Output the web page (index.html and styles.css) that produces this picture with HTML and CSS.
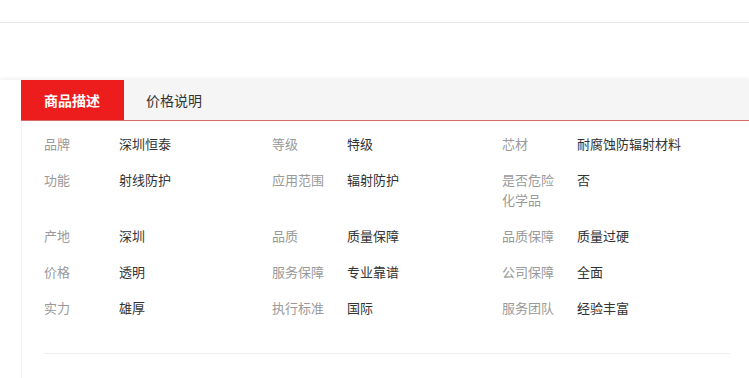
FILE: index.html
```html
<!DOCTYPE html>
<html lang="zh-CN">
<head>
<meta charset="utf-8">
<title>商品描述</title>
<link rel="stylesheet" href="styles.css">
</head>
<body>
  <header class="topbar"></header>
  <section class="detail">
    <div class="detail-body">
      <nav class="tabs">
        <span class="tab active">商品描述</span>
        <span class="tab">价格说明</span>
      </nav>
      <div class="props">
        <dl class="prop"><dt>品牌</dt><dd>深圳恒泰</dd></dl>
        <dl class="prop"><dt>等级</dt><dd>特级</dd></dl>
        <dl class="prop"><dt>芯材</dt><dd>耐腐蚀防辐射材料</dd></dl>
        <dl class="prop"><dt>功能</dt><dd>射线防护</dd></dl>
        <dl class="prop"><dt>应用范围</dt><dd>辐射防护</dd></dl>
        <dl class="prop"><dt>是否危险化学品</dt><dd>否</dd></dl>
        <dl class="prop"><dt>产地</dt><dd>深圳</dd></dl>
        <dl class="prop"><dt>品质</dt><dd>质量保障</dd></dl>
        <dl class="prop"><dt>品质保障</dt><dd>质量过硬</dd></dl>
        <dl class="prop"><dt>价格</dt><dd>透明</dd></dl>
        <dl class="prop"><dt>服务保障</dt><dd>专业靠谱</dd></dl>
        <dl class="prop"><dt>公司保障</dt><dd>全面</dd></dl>
        <dl class="prop"><dt>实力</dt><dd>雄厚</dd></dl>
        <dl class="prop"><dt>执行标准</dt><dd>国际</dd></dl>
        <dl class="prop"><dt>服务团队</dt><dd>经验丰富</dd></dl>
      </div>
      <div class="divider"></div>
    </div>
  </section>
</body>
</html>
```
FILE: styles.css
```css
html, body {
  margin: 0;
  padding: 0;
  background: #fff;
}

body {
  font-family: "Noto Sans CJK SC", "Microsoft YaHei", sans-serif;
  color: #333;
  overflow: hidden;
  height: 378px;
}

.topbar {
  height: 22px;
  border-bottom: 1px solid #e8e8e8;
}

.detail {
  margin-top: 57px;
  box-shadow: 0 -2px 3px rgba(0, 0, 0, 0.05);
}

.detail-body {
  margin-left: 21px;
}

.tabs {
  display: flex;
  height: 40px;
  background: #f5f5f5;
  border-bottom: 1px solid #d46a6a;
}

.tab {
  padding: 0 22px;
  line-height: 40px;
  font-size: 14px;
  color: #333;
}

.tab.active {
  padding: 0 24px 0 23px;
  background: #ee1d1d;
  color: #fff;
  font-weight: bold;
}

.props {
  display: grid;
  grid-template-columns: 228px 230px 1fr;
  padding: 5px 19px 0 22px;
  border-left: 1px solid #f0f0f0;
}

.prop {
  display: flex;
  margin: 0;
  padding: 8px 0;
  font-size: 13px;
  line-height: 20px;
}

.prop dt {
  width: 57px;
  margin-right: 18px;
  color: #999;
}

.prop dd {
  margin: 0;
  color: #333;
}

.divider {
  margin-right: 19px;
  padding-top: 27px;
  border-left: 1px solid #f0f0f0;
  height: 26px;
}

.divider::before {
  content: "";
  display: block;
  margin-left: 22px;
  border-top: 1px solid #eee;
}
```
